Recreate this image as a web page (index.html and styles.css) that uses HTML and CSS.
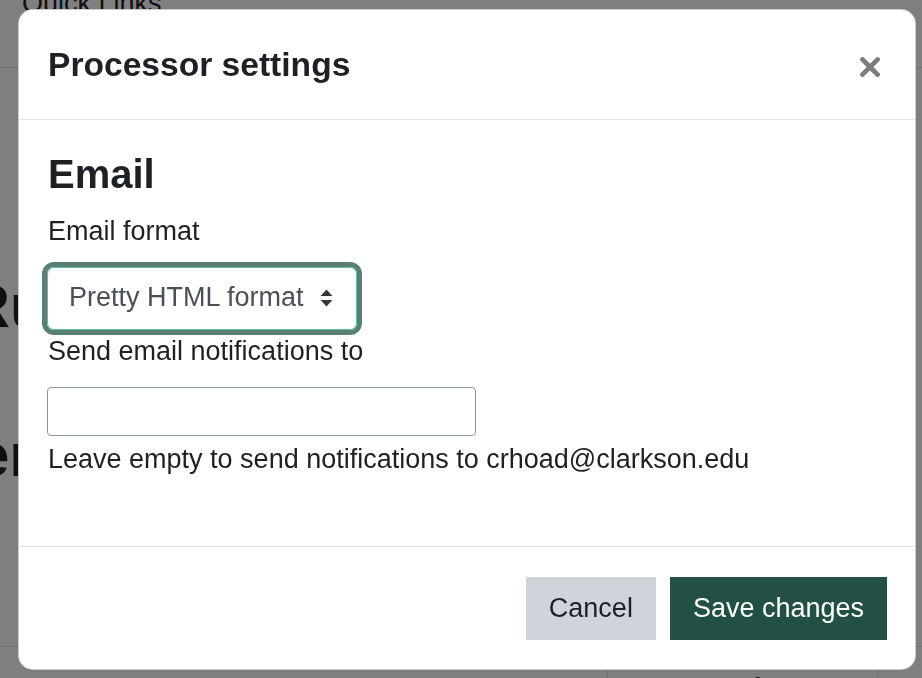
FILE: index.html
```html
<!DOCTYPE html>
<html lang="en">
<head>
<meta charset="utf-8">
<title>Processor settings</title>
<link rel="stylesheet" href="styles.css">
</head>
<body>
<div class="page">
  <div class="page-top"><span class="quick-links">Quick Links</span></div>
  <div class="page-main">
    <div class="big-heading first">Rubric</div>
    <div class="big-heading second">Gen</div>
  </div>
  <div class="page-table">
    <div class="cell"></div>
    <div class="cell bordered"><span class="cell-title">Welcome</span></div>
    <div class="cell bordered"></div>
  </div>
</div>
<div class="backdrop"></div>
<div class="modal" role="dialog" aria-labelledby="modal-title">
  <div class="modal-header">
    <h5 class="modal-title" id="modal-title">Processor settings</h5>
    <button class="close" aria-label="Close">
      <svg width="20" height="20" viewBox="0 0 20 20"><path d="M2.5 2.5 L17.5 17.5 M17.5 2.5 L2.5 17.5" stroke="#7c7c7c" stroke-width="4.6" stroke-linecap="square" fill="none"/></svg>
    </button>
  </div>
  <div class="modal-body">
    <h3 class="section-title">Email</h3>
    <label class="field-label">Email format</label>
    <div class="select">
      <span class="select-value">Pretty HTML format</span>
      <svg class="select-arrows" width="13" height="18" viewBox="0 0 13 18"><path d="M6.5 0.5 L12.5 7 L0.5 7 Z M0.5 11 L12.5 11 L6.5 17.5 Z" fill="#343a40"/></svg>
    </div>
    <label class="field-label">Send email notifications to</label>
    <div class="text-input"></div>
    <div class="help-text">Leave empty to send notifications to crhoad@clarkson.edu</div>
  </div>
  <div class="modal-footer">
    <button class="btn btn-secondary">Cancel</button>
    <button class="btn btn-primary">Save changes</button>
  </div>
</div>
</body>
</html>
```
FILE: styles.css
```css
* { box-sizing: border-box; }
html, body { margin: 0; padding: 0; }
body {
  font-family: "Liberation Sans", Arial, Helvetica, sans-serif;
  font-size: 27px;
  line-height: 39.75px;
  color: #1d2125;
  background: #ffffff;
  overflow: hidden;
  width: 922px;
  height: 678px;
}

/* background page */
.page { width: 922px; height: 678px; background: #fff; overflow: hidden; }
.page-top {
  height: 68px;
  border-bottom: 1px solid #dee2e6;
  padding-left: 22px;
  display: flex;
  align-items: flex-start;
}
.quick-links {
  display: block;
  line-height: 30px;
  margin-top: -12px;
}
.page-main { height: 578px; display: flex; flex-direction: column; align-items: flex-start; }
.big-heading {
  font-size: 61px;
  font-weight: bold;
  line-height: 1.2;
  white-space: nowrap;
}
.big-heading.first { margin-top: 202px; margin-left: -34px; }
.big-heading.second { margin-top: 76px; margin-left: -72px; }
.page-table {
  display: grid;
  grid-template-columns: 607px 270px 1fr;
  border-top: 1px solid #dee2e6;
  height: 40px;
}
.cell.bordered { border-left: 1px solid #dee2e6; }
.cell-title {
  display: block;
  font-weight: bold;
  padding: 22px 0 0 106px;
  white-space: nowrap;
}

.backdrop {
  position: fixed;
  inset: 0;
  background: rgba(0, 0, 0, 0.5);
}

/* modal */
.modal {
  position: fixed;
  left: 18px;
  top: 9px;
  width: 898px;
  height: 661px;
  background: #fff;
  border: 1px solid rgba(0, 0, 0, 0.2);
  border-radius: 15px;
  display: flex;
  flex-direction: column;
}
.modal-header {
  height: 110px;
  flex: none;
  display: flex;
  justify-content: space-between;
  align-items: flex-start;
  padding: 35px 35px 0 29px;
  border-bottom: 1px solid #dee2e6;
}
.modal-title {
  margin: 0;
  font-size: 33.6px;
  font-weight: bold;
  line-height: 1.2;
}
.close {
  margin-top: 12px;
  padding: 0;
  border: 0;
  background: none;
  width: 20px;
  height: 20px;
  display: flex;
}
.modal-body {
  flex: 1;
  padding: 0 27px 0 29px;
  display: flex;
  flex-direction: column;
  align-items: flex-start;
}
.section-title {
  margin: 30px 0 14px;
  font-size: 40px;
  font-weight: bold;
  line-height: 1.2;
}
.field-label {
  display: block;
  margin: 0 0 15px;
}
.select {
  margin: 0 0 2px -1px;
  width: 310px;
  height: 63px;
  border: 1px solid #5fbf9f;
  border-radius: 7px;
  box-shadow: 0 0 0 5px #5a7f76;
  display: flex;
  align-items: center;
  justify-content: space-between;
  padding: 0 23px 0 21px;
  color: #495057;
}
.select-value { white-space: nowrap; }
.select-arrows { display: block; }
.text-input {
  margin: 0 0 4px -1px;
  width: 429px;
  height: 49px;
  border: 1px solid #8f959e;
  border-radius: 4px;
  background: #fff;
}
.help-text { white-space: nowrap; }

.modal-footer {
  flex: none;
  height: 123px;
  border-top: 1px solid #dee2e6;
  display: flex;
  justify-content: flex-end;
  align-items: flex-start;
  gap: 14px;
  padding: 30px 28px 0 0;
}
.btn {
  height: 63px;
  padding: 0 23px;
  border: 0;
  border-radius: 0;
  font-family: inherit;
  font-size: 27px;
  line-height: 63px;
  white-space: nowrap;
}
.btn-secondary { background: #ced4da; color: #1d2125; }
.btn-primary { background: #225044; color: #ffffff; }
```
